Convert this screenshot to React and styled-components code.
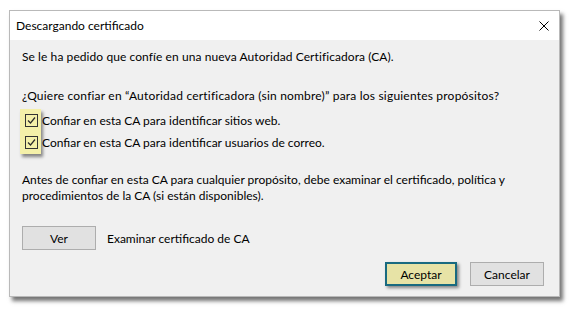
import React from 'react';
import styled, { createGlobalStyle } from 'styled-components';

const GlobalStyle = createGlobalStyle`
  html, body {
    margin: 0;
    padding: 0;
    background: #ffffff;
  }
  body {
    font-family: Lato, "Noto Sans", sans-serif;
    font-size: 12px;
    color: #000;
  }
`

const Page = styled.div`
  width: 572px;
  height: 309px;
  padding: 10px 0 0 9px;
  box-sizing: border-box;
`

const Dialog = styled.div`
  width: 551px;
  height: 287px;
  box-sizing: border-box;
  border: 1px solid #b9b9b9;
  background: #f0f0f0;
  box-shadow: 3px 4px 4px rgba(0, 0, 0, 0.55);
  display: flex;
  flex-direction: column;
`

const TitleBar = styled.div`
  height: 29px;
  background: #ffffff;
  display: flex;
  align-items: center;
  justify-content: space-between;
  padding: 0 9px 0 6px;
`

const Title = styled.span`
  font-size: 12px;
  color: #000;
`

const CloseButton = styled.button`
  border: none;
  background: transparent;
  padding: 0;
  width: 12px;
  height: 12px;
  display: flex;
  align-items: center;
  justify-content: center;
`

const Content = styled.div`
  flex: 1;
  display: flex;
  flex-direction: column;
  padding: 9px 14px 10px 12px;
`

const Text = styled.p`
  margin: ${(props) => props.margin || '0'};
  line-height: 16px;
  letter-spacing: ${(props) => props.spacing || 'normal'};
`

const CheckGroup = styled.div`
  position: relative;
  display: flex;
  flex-direction: column;
  margin: 5px 0 0 0;
`

const Highlight = styled.div`
  position: absolute;
  left: -2px;
  top: 0;
  width: 21px;
  height: 45px;
  background: #f4f0a9;
  box-shadow: 2px 3px 3px rgba(0, 0, 0, 0.45);
`

const CheckRow = styled.label`
  position: relative;
  display: flex;
  align-items: center;
  height: 22px;
  gap: 4px;
  padding-left: 3px;
`

const Box = styled.span`
  width: 11px;
  height: 11px;
  border: 1px solid #333333;
  display: flex;
  align-items: center;
  justify-content: center;
`

const ViewRow = styled.div`
  display: flex;
  align-items: center;
  gap: 11px;
  margin-top: 22px;
`

const Button = styled.button`
  width: ${(props) => props.width || '74px'};
  height: 24px;
  box-sizing: border-box;
  font-family: Lato, "Noto Sans", sans-serif;
  font-size: 12px;
  color: #000;
  background: ${(props) => (props.primary ? '#e7e3a6' : '#e1e1e1')};
  border: ${(props) => (props.primary ? '2px solid #196a80' : '1px solid #adadad')};
  box-shadow: ${(props) => (props.primary ? '2px 2px 3px rgba(0,0,0,0.45)' : 'none')};
  padding: 0;
`

const Footer = styled.div`
  margin-top: auto;
  display: flex;
  justify-content: flex-end;
  gap: 13px;
  padding-right: 1px;
`

function Check() {
  return (
    <Box>
      <svg width="9" height="9" viewBox="0 0 9 9">
        <path d="M1 4.5 L3.5 7 L8 1.5" fill="none" stroke="#2b2b2b" strokeWidth="1.2" />
      </svg>
    </Box>
  )
}

export default function App() {
  return (
    <Page>
      <GlobalStyle />
      <Dialog>
        <TitleBar>
          <Title>Descargando certificado</Title>
          <CloseButton aria-label="Cerrar">
            <svg width="10" height="10" viewBox="0 0 10 10">
              <path d="M0.5 0.5 L9.5 9.5 M9.5 0.5 L0.5 9.5" stroke="#000" strokeWidth="1" />
            </svg>
          </CloseButton>
        </TitleBar>
        <Content>
          <Text spacing="0.08px">Se le ha pedido que confíe en una nueva Autoridad Certificadora (CA).</Text>
          <Text margin="23px 0 0 0" spacing="0.2px">
            ¿Quiere confiar en “Autoridad certificadora (sin nombre)” para los siguientes propósitos?
          </Text>
          <CheckGroup>
            <Highlight />
            <CheckRow>
              <Check />
              Confiar en esta CA para identificar sitios web.
            </CheckRow>
            <CheckRow>
              <Check />
              Confiar en esta CA para identificar usuarios de correo.
            </CheckRow>
          </CheckGroup>
          <Text margin="19px 0 0 0">
            Antes de confiar en esta CA para cualquier propósito, debe examinar el certificado, política y
            <br />
            procedimientos de la CA (si están disponibles).
          </Text>
          <ViewRow>
            <Button>Ver</Button>
            <span>Examinar certificado de CA</span>
          </ViewRow>
          <Footer>
            <Button primary width="72px">Aceptar</Button>
            <Button>Cancelar</Button>
          </Footer>
        </Content>
      </Dialog>
    </Page>
  )
}
